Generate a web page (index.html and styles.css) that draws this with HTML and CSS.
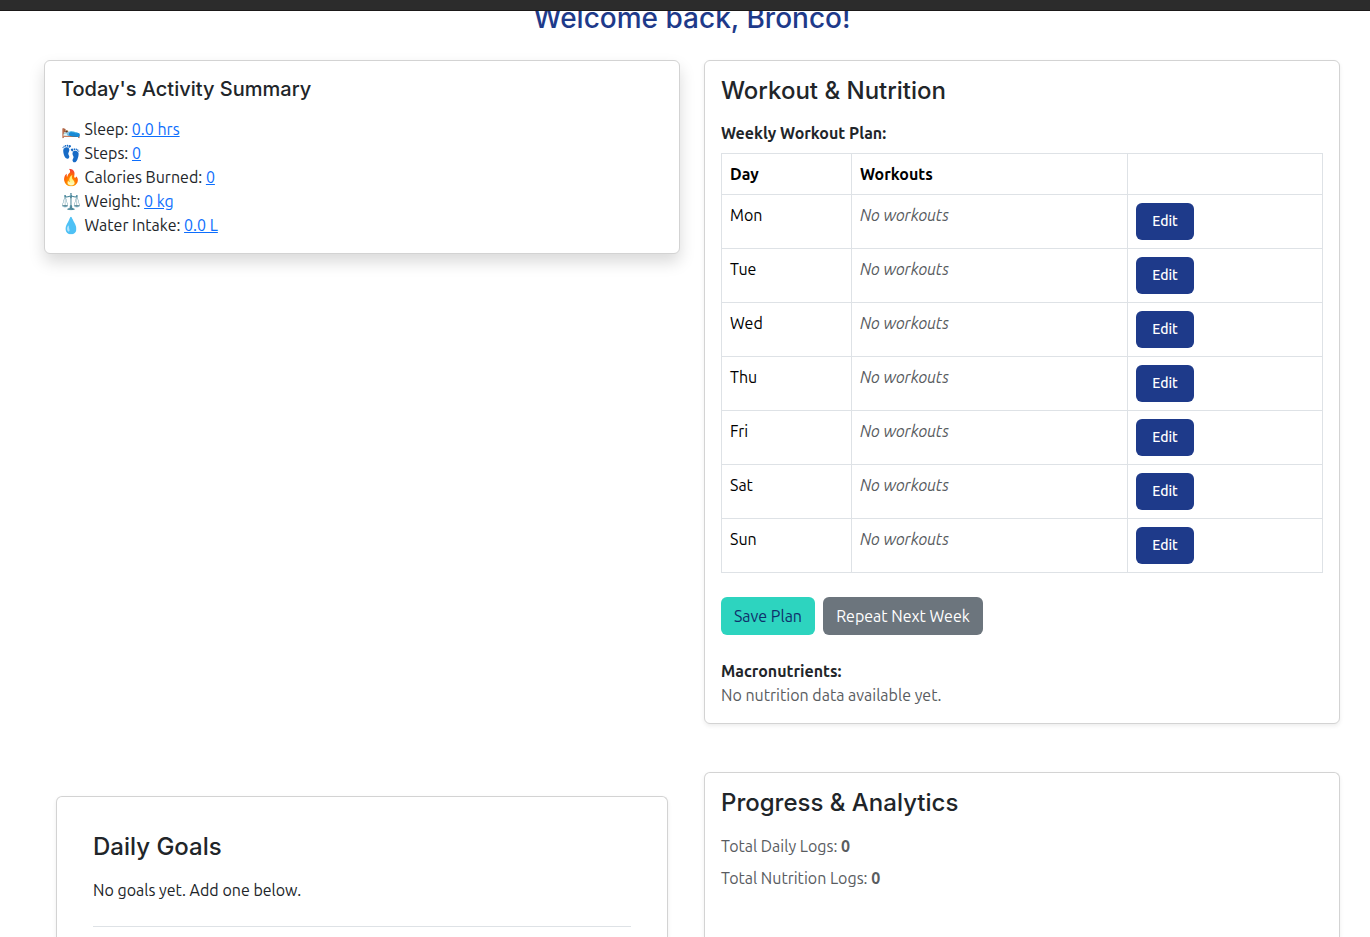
FILE: index.html
```
<!DOCTYPE html>
<html lang="en">
<head>
<meta charset="utf-8">
<title>Dashboard</title>
<link rel="stylesheet" href="styles.css">
</head>
<body>
<nav class="topbar"></nav>
<main class="page">
  <h2 class="welcome">Welcome back, Bronco!</h2>
  <div class="columns">
    <div class="column">
      <section class="card summary">
        <h5 class="summary-title">Today's Activity Summary</h5>
        <ul class="stats">
          <li>🛌 Sleep: <a href="#">0.0 hrs</a></li>
          <li>👣 Steps: <a href="#">0</a></li>
          <li>🔥 Calories Burned: <a href="#">0</a></li>
          <li>⚖️ Weight: <a href="#">0 kg</a></li>
          <li>💧 Water Intake: <a href="#">0.0 L</a></li>
        </ul>
      </section>
    </div>
    <div class="column">
      <section class="card workout">
        <h4>Workout &amp; Nutrition</h4>
        <strong class="label plan-label">Weekly Workout Plan:</strong>
        <table class="plan">
          <colgroup><col class="c-day"><col class="c-work"><col></colgroup>
          <thead><tr><th>Day</th><th>Workouts</th><th></th></tr></thead>
          <tbody>
            <tr><td>Mon</td><td><em>No workouts</em></td><td><button class="edit">Edit</button></td></tr>
            <tr><td>Tue</td><td><em>No workouts</em></td><td><button class="edit">Edit</button></td></tr>
            <tr><td>Wed</td><td><em>No workouts</em></td><td><button class="edit">Edit</button></td></tr>
            <tr><td>Thu</td><td><em>No workouts</em></td><td><button class="edit">Edit</button></td></tr>
            <tr><td>Fri</td><td><em>No workouts</em></td><td><button class="edit">Edit</button></td></tr>
            <tr><td>Sat</td><td><em>No workouts</em></td><td><button class="edit">Edit</button></td></tr>
            <tr><td>Sun</td><td><em>No workouts</em></td><td><button class="edit">Edit</button></td></tr>
          </tbody>
        </table>
        <div class="actions"><button class="btn save">Save Plan</button><button class="btn repeat">Repeat Next Week</button></div>
        <strong class="label macro-label">Macronutrients:</strong>
        <p class="muted no-data">No nutrition data available yet.</p>
      </section>
    </div>
  </div>
  <div class="columns lower">
    <div class="column goals-column">
      <section class="card goals">
        <h4>Daily Goals</h4>
        <p class="no-goals">No goals yet. Add one below.</p>
        <hr>
      </section>
    </div>
    <div class="column">
      <section class="card progress">
        <h4>Progress &amp; Analytics</h4>
        <p class="muted">Total Daily Logs: <strong>0</strong></p>
        <p class="muted">Total Nutrition Logs: <strong>0</strong></p>
      </section>
    </div>
  </div>
</main>
</body>
</html>
```
FILE: styles.css
```
* { box-sizing: border-box; }
body {
  margin: 0;
  height: 937px;
  overflow: hidden;
  background: #fff;
  color: #212529;
  font: 400 16px/24px Ubuntu, "Noto Sans", "Noto Color Emoji", sans-serif;
}
h2, h4, h5, p, ul { margin: 0; padding: 0; }
h2, h4, h5 { font-family: Inter, sans-serif; font-weight: 500; white-space: nowrap; }
h4 { font-size: 24px; line-height: 28.8px; }
.topbar { position: fixed; top: 0; left: 0; right: 0; z-index: 1; height: 11px; background: #2c2c2c; border-bottom: 1px solid #1b1919; }
.page { padding: 1px 30px 0 44px; }
.welcome { margin-bottom: 25px; font-size: 28px; line-height: 34px; text-align: center; color: #1e3a8a; }
.columns { display: grid; grid-template-columns: 1fr 1fr; gap: 24px; }
.lower { margin-top: 48px; }
.card { padding: 16px; border: 1px solid #d3d3d3; border-radius: 6px; background: #fff; box-shadow: 0 2px 4px rgba(0, 0, 0, 0.075); }
.summary { height: 194px; box-shadow: 0 8px 16px rgba(0, 0, 0, 0.15); }
.summary-title { margin-bottom: 16px; font-size: 20px; line-height: 24px; }
.stats { list-style: none; }
.stats li { height: 24px; }
a { color: #0d6efd; }
.workout { height: 664px; }
.label { display: block; font-weight: 700; }
.plan-label { margin: 15px 0 8px; }
.plan { width: 602px; border-collapse: collapse; table-layout: fixed; color: #000; }
.c-day { width: 130px; }
.c-work { width: 276px; }
th, td { padding: 8px; border: 1px solid #dee2e6; text-align: left; vertical-align: top; }
th { height: 41px; font-weight: 700; }
td { height: 54px; }
td em { color: #595c5f; }
button { border: 0; border-radius: 6px; font: inherit; white-space: nowrap; padding: 0; }
.edit { display: block; width: 58px; height: 37px; background: #1e3a8a; color: #fff; font-size: 14px; font-weight: 500; }
.actions { display: flex; gap: 8px; margin: 24px 0; }
.btn { height: 38px; }
.save { width: 94px; background: #2dd4bf; color: #0f2f6b; }
.repeat { width: 160px; background: #6c757d; color: #fff; }
.muted { color: #595c5f; }
.goals-column { padding: 24px 12px 0; }
.goals, .progress { border-bottom: 0; border-radius: 6px 6px 0 0; }
.goals { height: 141px; padding: 36px 36px 0; }
.no-goals { margin-top: 16px; }
hr { margin: 24px 0 0; border: 0; border-top: 1px solid #dee2e6; }
.progress { height: 165px; padding-bottom: 0; }
.progress h4 { margin-bottom: 16px; }
.progress p { margin-bottom: 8px; }
```
